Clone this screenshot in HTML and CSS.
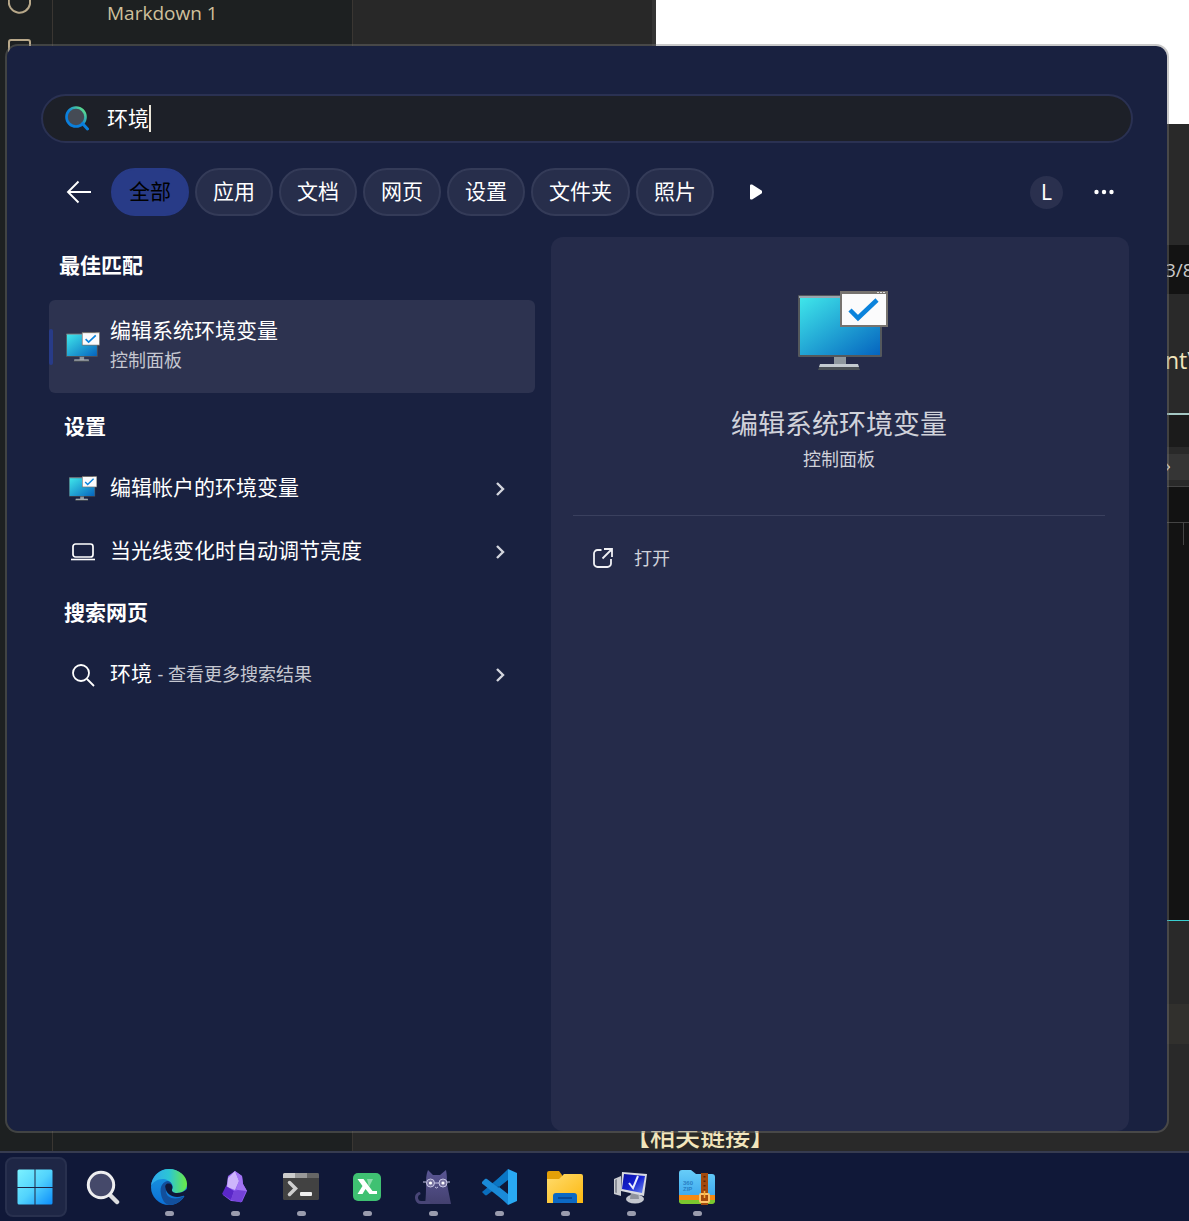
FILE: index.html
```html
<!DOCTYPE html>
<html lang="zh-CN">
<head>
<meta charset="utf-8">
<meta name="viewport" content="width=device-width, initial-scale=1">
<title>搜索</title>
<link rel="stylesheet" href="styles.css">
</head>
<body>
<svg width="0" height="0" class="defs" aria-hidden="true">
  <defs>
    <linearGradient id="screen" x1="0" y1="0" x2="1" y2="1"><stop offset="0" stop-color="#3fe6ea"/><stop offset="1" stop-color="#0564bf"/></linearGradient>
    <linearGradient id="lens" x1="0" y1="1" x2="1" y2="0"><stop offset=".45" stop-color="#0a7fdc"/><stop offset="1" stop-color="#6ff27a"/></linearGradient>
    <linearGradient id="win" gradientUnits="userSpaceOnUse" x1="0" y1="0" x2="36" y2="36"><stop offset="0" stop-color="#7df3ff"/><stop offset=".5" stop-color="#52d3fd"/><stop offset="1" stop-color="#0a8bfb"/></linearGradient>
    <linearGradient id="edgeTop" x1="0" y1="0" x2="1" y2="0"><stop offset="0" stop-color="#2fa8ee"/><stop offset=".5" stop-color="#2cc6d4"/><stop offset="1" stop-color="#6bea43"/></linearGradient>
    <linearGradient id="edgeLow" x1="0" y1="0" x2="0" y2="1"><stop offset="0" stop-color="#1a9ae0"/><stop offset="1" stop-color="#0c6fd6"/></linearGradient>
    <linearGradient id="folder" x1="0" y1="0" x2="1" y2="1"><stop offset="0" stop-color="#ffdc6e"/><stop offset="1" stop-color="#fdb80f"/></linearGradient>
    <linearGradient id="cat" x1="0" y1="0" x2="0" y2="1"><stop offset="0" stop-color="#5a5694"/><stop offset="1" stop-color="#43406f"/></linearGradient>
    <linearGradient id="pc" x1="0" y1="0" x2="1" y2="1"><stop offset="0" stop-color="#0a10a0"/><stop offset=".5" stop-color="#1420d0"/><stop offset="1" stop-color="#6f8cf0"/></linearGradient>
    <linearGradient id="zip" x1="0" y1="0" x2="0" y2="1"><stop offset="0" stop-color="#67cdf8"/><stop offset="1" stop-color="#3aa6ee"/></linearGradient>
    <symbol id="monitor" viewBox="0 0 90 80">
      <rect x="36" y="65" width="12" height="10" fill="#8e979e"/>
      <path d="M22 74h38l2 5H20z" fill="#4a5056"/><path d="M22 73h38l1 3H21z" fill="#c3cad0"/>
      <rect x="0" y="4" width="84" height="62" rx="1" fill="#54585c"/>
      <rect x="1" y="5" width="82" height="2" fill="#9aa4ae"/>
      <rect x="2" y="7" width="80" height="57" fill="url(#screen)"/>
      <rect x="42" y="0" width="48" height="36" fill="#77736f"/>
      <rect x="44" y="3" width="44" height="31" fill="#fbfbfc"/>
      <path d="M79 1.500h8" stroke="#ddd" stroke-dasharray="2 1"/>
      <path d="M52 19l8 8L79 9" fill="none" stroke="#0b83dc" stroke-width="4.500"/>
    </symbol>
    <symbol id="chevron" viewBox="0 0 10 16"><path d="M2 2l6 6-6 6" fill="none" stroke="#d3d5dd" stroke-width="2.400"/></symbol>
  </defs>
</svg>

<div class="screen">
  <div class="desktop">
    <div class="editor" aria-hidden="true">
      <div class="rail">
        <svg width="24" height="60" viewBox="0 0 24 60" fill="none" stroke="#b8a88a" stroke-width="2"><path d="M1 0a10.500 10.500 0 0 0 21 4V0"/><rect x="1" y="40" width="21" height="18" rx="2"/></svg>
      </div>
      <div class="files"><span>Markdown 1</span></div>
      <div class="panes">
        <div class="pane-top"><div class="pane-dark"></div><div class="pane-white"></div></div>
        <div class="band band-a"></div>
        <div class="band band-count"><span>3/8</span></div>
        <div class="band band-code"><span>nt\</span></div>
        <div class="band band-b"></div>
        <div class="band band-crumb"><span>›</span></div>
        <div class="band band-c"></div>
        <div class="band band-d"><i class="guide"></i></div>
        <div class="band band-e"></div>
        <div class="band band-f"></div>
        <div class="band band-links"><span>【相关链接】</span></div>
      </div>
    </div>

    <main class="panel">
      <label class="search">
        <svg width="24" height="25" viewBox="0 0 24 25" fill="none"><circle cx="11" cy="11" r="9.500" fill="#454b55" stroke="url(#lens)" stroke-width="2.600"/><path d="M17.500 17.500l5 5.500" stroke="#0a7fdc" stroke-width="3" stroke-linecap="round"/></svg>
        <input type="text" value="环境" aria-label="搜索"><span class="caret"></span>
      </label>

      <nav class="filters">
        <button class="back" aria-label="返回"><svg width="26" height="24" viewBox="0 0 26 24" fill="none" stroke="#fff" stroke-width="1.900"><path d="M12.500 1.500L2 12l10.500 10.500M2 12h23"/></svg></button>
        <button class="chip active">全部</button>
        <button class="chip">应用</button>
        <button class="chip">文档</button>
        <button class="chip">网页</button>
        <button class="chip">设置</button>
        <button class="chip">文件夹</button>
        <button class="chip">照片</button>
        <button class="play" aria-label="更多筛选"><svg width="14" height="18" viewBox="0 0 14 18"><path d="M2 2.500v13h1L12 9.700V8.300L3 2.500z" fill="#fff" stroke="#fff" stroke-width="2" stroke-linejoin="round"/></svg></button>
        <button class="avatar">L</button>
        <button class="more" aria-label="选项"><svg width="20" height="6" viewBox="0 0 20 6" fill="#fff"><circle cx="2.500" cy="3" r="2.200"/><circle cx="10" cy="3" r="2.200"/><circle cx="17.500" cy="3" r="2.200"/></svg></button>
      </nav>

      <div class="columns">
        <section class="results">
          <h2 class="lead">最佳匹配</h2>
          <a href="#" class="best">
            <svg class="ico" width="34" height="30"><use href="#monitor"/></svg>
            <span class="stack"><span class="name">编辑系统环境变量</span><span class="note">控制面板</span></span>
          </a>
          <h2>设置</h2>
          <a href="#" class="row"><svg class="ico" width="28" height="25"><use href="#monitor"/></svg><span class="name">编辑帐户的环境变量</span><svg width="10" height="16"><use href="#chevron"/></svg></a>
          <a href="#" class="row"><svg class="ico" width="24" height="18" viewBox="0 0 24 18" fill="none" stroke="#fff"><rect x="2" y="1" width="20" height="13" rx="2.500" stroke-width="1.700"/><path d="M0 16.500h24" stroke-width="1.600"/></svg><span class="name">当光线变化时自动调节亮度</span><svg width="10" height="16"><use href="#chevron"/></svg></a>
          <h2 class="web">搜索网页</h2>
          <a href="#" class="row"><svg class="ico" width="24" height="24" viewBox="0 0 24 24" fill="none" stroke="#fff" stroke-width="1.800"><circle cx="10" cy="10" r="8"/><path d="M16 16l7 7"/></svg><span class="name">环境 <span class="note">- 查看更多搜索结果</span></span><svg width="10" height="16"><use href="#chevron"/></svg></a>
        </section>

        <section class="preview">
          <svg width="90" height="80"><use href="#monitor"/></svg>
          <h1>编辑系统环境变量</h1>
          <p>控制面板</p>
          <hr>
          <a href="#" class="open"><svg width="20" height="20" viewBox="0 0 20 20" fill="none" stroke="#f0f0f4" stroke-width="1.800"><path d="M8.500 2H4.500A3.500 3.500 0 0 0 1 5.500v10A3.500 3.500 0 0 0 4.500 19h10a3.500 3.500 0 0 0 3.500-3.500V11M11 1h8v8M19 1l-9.500 9.500"/></svg>打开</a>
        </section>
      </div>
    </main>
  </div>

  <footer class="taskbar">
    <button class="start" aria-label="开始"><svg width="36" height="36" viewBox="0 0 36 36"><path d="M2 .500h15.500V18H.500V2A1.500 1.500 0 0 1 2 .500zM18.500 .500H34A1.500 1.500 0 0 1 35.500 2v16h-17zM.500 19h17v16.500H2A1.500 1.500 0 0 1 .500 34zM18.500 19h17v15a1.500 1.500 0 0 1-1.500 1.500H18.500z" fill="url(#win)"/></svg></button>
    <button aria-label="搜索"><svg width="36" height="36" viewBox="0 0 36 36"><path d="M24 25l8 8" stroke="#dcdcdf" stroke-width="4.500" stroke-linecap="round"/><circle cx="16" cy="16" r="12.700" fill="#45496a" stroke="#eeeef0" stroke-width="3"/></svg></button>
    <button class="running" aria-label="Edge"><svg width="36" height="36" viewBox="0 0 36 36">
      <circle cx="18" cy="18" r="18" fill="url(#edgeLow)"/>
      <path d="M0 17C1 7 9 0 18 0c10 0 18 7 18 15 0 6-5 9-10 9-4 0-6-2-5-3.500 2-3 0-7-4-9C11 8 3 11 0 17z" fill="url(#edgeTop)"/>
      <path d="M10 25c-2-8 3-13 7-13 3 1 5 4 4 7-2-2-6-1-6 3 0 7 9 10 18 5-3 6-9 9-15 9-4-1-7-5-8-11z" fill="#124f9c"/>
      <path d="M14.500 19c-1-3 1-5 4-4.500 3 1 3.500 4 2.500 6-.500 2 1.500 3.500 5 3.500 4 0 7-1.500 10-4v6l-2.500 1.500c-.500-1-1-1-2-.500-8 3-16-1-17-8z" fill="#101838"/>
    </svg></button>
    <button class="running" aria-label="Obsidian"><svg width="36" height="36" viewBox="0 0 36 36">
      <path d="M18 2l7 5 1 8 4 7-5 11-11-1-8-6 4-11 1-8z" fill="#8e5cf0"/><path d="M18 2l-7 7-1 9 8 3 4-9z" fill="#cdb5fb"/><path d="M18 2l4 10-3 8 5 3 6-1-4-7-1-8z" fill="#a274f3"/><path d="M9 17l-4 8 9 6 3-9z" fill="#5a27c8"/><path d="M17 22l-3 9 10 2.500 5-11.500-8-1z" fill="#7442d8"/>
    </svg></button>
    <button class="running" aria-label="终端"><svg width="36" height="36" viewBox="0 0 36 36">
      <rect y="4" width="36" height="27" rx="1.500" fill="#424242"/><path d="M0 9V5.500A1.500 1.500 0 0 1 1.500 4H12v5z" fill="#ccc"/><path d="M12 4h12v5H12z" fill="#999"/><path d="M24 4h10.500A1.500 1.500 0 0 1 36 5.500V9H24z" fill="#666"/>
      <path d="M6.500 13.500l6 6-6 6" fill="none" stroke="#cfcfcf" stroke-width="3.500" stroke-linecap="round"/><rect x="17" y="23" width="12" height="4" rx="1" fill="#efefef"/>
    </svg></button>
    <button class="running" aria-label="Xshell"><svg width="36" height="36" viewBox="0 0 36 36"><rect x="4" y="4" width="28" height="28" rx="5" fill="#3fc172"/><path d="M18 10h6l-4 8z" fill="#8bdcab"/><path d="M8.500 10h6l9 12H28v3h-7.500l-4-5-3 5H8.500l5-8z" fill="#fff"/></svg></button>
    <button class="running" aria-label="Clash"><svg width="36" height="36" viewBox="0 0 36 36">
      <path d="M10 35c1-7 1-13 1-20 0-5 0-9 2-14l5 5h7l6-5c1 5 1 9 1 14l4 20z" fill="url(#cat)"/><path d="M14 33.500H6c-5 0-6-7-2-9" fill="none" stroke="#484576" stroke-width="3" stroke-linecap="round"/><g fill="#77739f" stroke="#c9c7e6" stroke-width="1"><circle cx="15.500" cy="14" r="4"/><circle cx="28" cy="14" r="4"/></g><g fill="#fff"><circle cx="15.500" cy="14" r="1.600"/><circle cx="28" cy="14" r="1.600"/></g><path d="M20 14h4M8 13h3M32 13h3M20 18l1.500 1 1.500-1" fill="none" stroke="#c9c7e6"/>
    </svg></button>
    <button class="running" aria-label="Visual Studio Code"><svg width="36" height="36" viewBox="0 0 36 36">
      <path d="M1 23l3 3c.700.500 1.300.500 2 0L27 10V1z" fill="#0a6ebd"/><path d="M1 13l3-3c.700-.500 1.300-.500 2 0l21 16v9L1 14.500z" fill="#1a8ad8"/><path d="M27 0l9 4v28l-9 4z" fill="#29a9f3"/><path d="M27 0v11L18 18l-5-4z" fill="#0a76c4"/><path d="M27 36V25l-9-7-5 4z" fill="#1a8ad8"/>
    </svg></button>
    <button class="running" aria-label="文件资源管理器"><svg width="36" height="36" viewBox="0 0 36 36">
      <path d="M0 14V4a2 2 0 0 1 2-2h10l3 4v8z" fill="#e3a008"/><path d="M0 10h12l5-5h17a2 2 0 0 1 2 2v27H0z" fill="url(#folder)"/><path d="M6 34v-7a3 3 0 0 1 3-3h18a3 3 0 0 1 3 3v7z" fill="#0c69c4"/><path d="M11 29h14" stroke="#093f87" stroke-width="1.500"/>
    </svg></button>
    <button class="running" aria-label="远程桌面"><svg width="36" height="36" viewBox="0 0 36 36">
      <path d="M1 10l7-3v20l-7-2z" fill="#c9cbd0"/><path d="M2 11l2-1v14l-2-.500z" fill="#8b8f98"/><ellipse cx="22" cy="30" rx="9" ry="4.500" fill="#c4c7cf"/><path d="M18 22h7l1 8h-9z" fill="#8f939d"/><path d="M9 3l25 2-3 22-23-5z" fill="#d8dae0"/><path d="M11 5l21 2-3 17-20-4z" fill="url(#pc)"/><path d="M16 14l4 5 5-12" fill="none" stroke="#e8ecff" stroke-width="2"/>
    </svg></button>
    <button class="running" aria-label="360压缩"><svg width="36" height="36" viewBox="0 0 36 36">
      <path d="M0 30V4a3 3 0 0 1 3-3h9l5 4h16a3 3 0 0 1 3 3v22z" fill="url(#zip)"/><path d="M0 26h36v5H0z" fill="#f68a12"/><path d="M0 31h36v2a3 3 0 0 1-3 2H3a3 3 0 0 1-3-2z" fill="#7bc72e"/><text x="4" y="16" class="ziptext">360</text><text x="4" y="22" class="ziptext">ZIP</text><rect x="22" y="4" width="7" height="32" fill="#a44a0e"/><path d="M25.500 7v14" stroke="#5a2606" stroke-width="2" stroke-dasharray="1.500 3"/><rect x="21" y="25" width="9" height="8" rx="1" fill="#a44a0e" stroke="#fcc36b" stroke-width="2"/><path d="M25.500 22v7" stroke="#fcb03a" stroke-width="1.500"/>
    </svg></button>
  </footer>
</div>
</body>
</html>
```

FILE: styles.css
```css
* { box-sizing: border-box; }

body {
  margin: 0;
  background: #101838;
  color: #fff;
  font-family: "Noto Sans", "Noto Sans CJK SC", sans-serif;
  font-size: 21px;
}

button, input {
  margin: 0;
  padding: 0;
  border: 0;
  background: none;
  color: inherit;
  font: inherit;
}

a { color: inherit; text-decoration: none; }
h1, h2, p { margin: 0; }
svg { display: block; flex: none; }
.defs { position: absolute; }

.screen {
  display: grid;
  grid-template-rows: 1fr 70px;
  min-height: 100vh;
}

.desktop {
  position: relative;
  display: grid;
}

/* Editor windows behind the search panel */
.editor {
  display: grid;
  grid-template-columns: 53px 300px 1fr;
  overflow: hidden;
  background: #282828;
}

.rail {
  padding-left: 8px;
  background: #1d2021;
  border-right: 1px solid #3a3632;
}

.files {
  padding-left: 54px;
  background: #1d2021;
  border-right: 1px solid #3a3632;
  color: #cfc09c;
  font-family: "Open Sans", sans-serif;
  font-size: 19px;
  line-height: 26px;
}

.panes {
  display: flex;
  flex-direction: column;
  min-width: 0;
}

.pane-top { display: flex; height: 124px; }
.pane-dark { width: 303px; background: #282828; border-right: 4px solid #343434; }
.pane-white { flex: 1; background: #fff; }

.band {
  display: flex;
  justify-content: flex-end;
  align-items: center;
  font-family: "Open Sans", sans-serif;
  white-space: nowrap;
}

.band span { flex: none; width: 24px; }
.band-a { height: 121px; background: #292929; }
.band-count { height: 49px; background: #131313; color: #c8c8c8; font-size: 19px; }
.band-code { height: 121px; padding-top: 12px; background: #292929; border-bottom: 2px solid #a5c8c4; color: #f2e5bc; font-size: 23px; }
.band-b { height: 32px; background: #1b1b1b; }
.band-crumb { height: 39px; background: #353535; border: solid #292929; border-width: 7px 0 6px; color: #ddd; font-size: 19px; line-height: 22px; }
.band-crumb span { padding-bottom: 4px; }
.band-c { height: 37px; background: #121212; border-top: 1px solid #444; border-bottom: 1px solid #444; }
.band-d { flex: 1; align-items: flex-start; padding-right: 5px; background: #131313; border-bottom: 1px solid #39cfd0; }
.guide { width: 1px; height: 22px; background: #444; }
.band-e { height: 83px; background: #292929; }
.band-f { height: 40px; background: #31302d; }
.band-links {
  height: 107px;
  background: #292929;
  justify-content: flex-start;
  align-items: flex-end;
  padding-left: 272px;
  color: #f2e5bc;
  font-family: "Noto Sans CJK SC", sans-serif;
  font-size: 25px;
  font-weight: 500;
  line-height: 32px;
}
.band-links span { width: auto; }

/* Search panel, floating above the desktop */
.panel {
  position: absolute;
  inset: 44px 20px 18px 5px;
  display: flex;
  flex-direction: column;
  padding: 48px 34px 0 34px;
  border: 2px solid rgba(120, 120, 120, 0.4);
  border-radius: 13px;
  background: #192140;
  background-clip: padding-box;
}

.search {
  display: flex;
  align-items: center;
  height: 49px;
  padding: 0 22px;
  border: 2px solid #2a3152;
  border-radius: 25px;
  background: #1d2028;
}

.search input {
  field-sizing: content;
  height: 30px;
  margin-left: 18px;
  padding-bottom: 4px;
  outline: 0;
  color: #fff;
}

.caret { width: 2px; height: 27px; background: #e8e4d8; }

.filters {
  display: flex;
  align-items: center;
  gap: 6px;
  margin-top: 25px;
  padding: 0 19px 0 25px;
}

.back { margin-right: 13px; }

.chip {
  height: 48px;
  padding: 0 16px 5px;
  border: 2px solid #343b58;
  border-radius: 24px;
  background: #272e4b;
}

.chip.active { border-color: #283b87; background: #283b87; color: #000; }
.play { margin-left: 29px; }

.avatar {
  width: 33px;
  height: 33px;
  margin-left: auto;
  border-radius: 50%;
  background: #2a304e;
  line-height: 33px;
}

.more { margin-left: 25px; }

.columns {
  flex: 1;
  display: grid;
  grid-template-columns: 486fr 578fr;
  gap: 16px;
  margin-top: 21px;
  padding: 0 4px 0 8px;
}

h2 {
  height: 64px;
  padding-left: 15px;
  font-size: 21px;
  font-weight: 700;
  line-height: 66px;
}

.lead { height: 63px; padding-left: 10px; line-height: 57px; }
.web { height: 60px; line-height: 58px; }

.best {
  position: relative;
  display: grid;
  grid-template-columns: 61px 1fr;
  align-items: center;
  height: 93px;
  border-radius: 6px;
  background: #2d3350;
}

.best::before {
  content: "";
  position: absolute;
  left: 0;
  top: 29px;
  width: 4px;
  height: 36px;
  border-radius: 2px;
  background: #283b87;
}

.ico { justify-self: center; margin-left: 6px; }
.stack { display: flex; flex-direction: column; padding-bottom: 4px; line-height: 30px; }
.note { color: #c5c7d0; font-size: 18px; }

.row {
  display: grid;
  grid-template-columns: 61px 1fr 10px;
  align-items: center;
  height: 63px;
  padding-right: 30px;
}

.row .name { padding-bottom: 3px; line-height: 30px; }

.preview {
  display: flex;
  flex-direction: column;
  align-items: center;
  padding: 54px 24px 0 22px;
  border-radius: 12px;
  background: #252b4a;
  color: #d0d2da;
}

.preview > svg { margin-left: 8px; }
.preview h1 { margin-top: 33px; font-size: 27px; font-weight: 400; line-height: 40px; }
.preview p { font-size: 18px; line-height: 30px; }
.preview hr { width: 100%; height: 1px; margin: 41px 0 0; border: 0; background: #3a405e; }

.open {
  display: flex;
  align-items: center;
  gap: 21px;
  align-self: flex-start;
  margin-top: 25px;
  padding-left: 20px;
  font-size: 18px;
  line-height: 34px;
}

/* Taskbar */
.taskbar {
  display: flex;
  align-items: center;
  gap: 6px;
  padding-left: 5px;
  border-top: 2px solid #363b50;
  background: #101838;
}

.taskbar button {
  position: relative;
  display: grid;
  place-items: center;
  width: 60px;
  height: 60px;
}

.taskbar .start {
  width: 62px;
  padding-right: 2px;
  border: 2px solid #28304e;
  border-radius: 8px;
  background: #1e2645;
}

.running::after {
  content: "";
  position: absolute;
  left: 26px;
  bottom: 1px;
  width: 9px;
  height: 5px;
  border-radius: 3px;
  background: #9a9cae;
}

.ziptext { fill: #2a7fc4; font: 700 6px "Liberation Sans", sans-serif; }
```
